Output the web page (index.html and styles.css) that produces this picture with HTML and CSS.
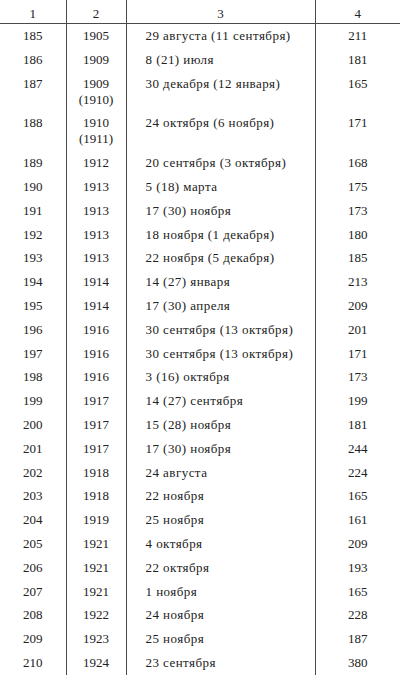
FILE: index.html
```html
<!DOCTYPE html>
<html lang="ru">
<head>
<meta charset="utf-8">
<link rel="stylesheet" href="styles.css">
</head>
<body>
<table class="tbl">
<colgroup><col class="c1"><col class="c2"><col class="c3"><col class="c4"></colgroup>
<thead>
<tr><th>1</th><th>2</th><th>3</th><th>4</th></tr>
</thead>
<tbody>
<tr><td>185</td><td>1905</td><td>29 августа (11 сентября)</td><td>211</td></tr>
<tr><td>186</td><td>1909</td><td>8 (21) июля</td><td>181</td></tr>
<tr><td>187</td><td>1909<br>(1910)</td><td>30 декабря (12 января)</td><td>165</td></tr>
<tr><td>188</td><td>1910<br>(1911)</td><td>24 октября (6 ноября)</td><td>171</td></tr>
<tr><td>189</td><td>1912</td><td>20 сентября (3 октября)</td><td>168</td></tr>
<tr><td>190</td><td>1913</td><td>5 (18) марта</td><td>175</td></tr>
<tr><td>191</td><td>1913</td><td>17 (30) ноября</td><td>173</td></tr>
<tr><td>192</td><td>1913</td><td>18 ноября (1 декабря)</td><td>180</td></tr>
<tr><td>193</td><td>1913</td><td>22 ноября (5 декабря)</td><td>185</td></tr>
<tr><td>194</td><td>1914</td><td>14 (27) января</td><td>213</td></tr>
<tr><td>195</td><td>1914</td><td>17 (30) апреля</td><td>209</td></tr>
<tr><td>196</td><td>1916</td><td>30 сентября (13 октября)</td><td>201</td></tr>
<tr><td>197</td><td>1916</td><td>30 сентября (13 октября)</td><td>171</td></tr>
<tr><td>198</td><td>1916</td><td>3 (16) октября</td><td>173</td></tr>
<tr><td>199</td><td>1917</td><td>14 (27) сентября</td><td>199</td></tr>
<tr><td>200</td><td>1917</td><td>15 (28) ноября</td><td>181</td></tr>
<tr><td>201</td><td>1917</td><td>17 (30) ноября</td><td>244</td></tr>
<tr><td>202</td><td>1918</td><td>24 августа</td><td>224</td></tr>
<tr><td>203</td><td>1918</td><td>22 ноября</td><td>165</td></tr>
<tr><td>204</td><td>1919</td><td>25 ноября</td><td>161</td></tr>
<tr><td>205</td><td>1921</td><td>4 октября</td><td>209</td></tr>
<tr><td>206</td><td>1921</td><td>22 октября</td><td>193</td></tr>
<tr><td>207</td><td>1921</td><td>1 ноября</td><td>165</td></tr>
<tr><td>208</td><td>1922</td><td>24 ноября</td><td>228</td></tr>
<tr><td>209</td><td>1923</td><td>25 ноября</td><td>187</td></tr>
<tr><td>210</td><td>1924</td><td>23 сентября</td><td>380</td></tr>
</tbody>
</table>
</body>
</html>
```
FILE: styles.css
```css
html, body {
  margin: 0;
  padding: 0;
  background: #ffffff;
}
body {
  font: 13px Tinos, "Liberation Serif";
  color: #222222;
}
.tbl {
  width: 400px;
  border-collapse: collapse;
  table-layout: fixed;
  font: 13px Tinos, "Liberation Serif";
}
.c1 { width: 66px; }
.c2 { width: 60px; }
.c3 { width: 189px; }
.c4 { width: 85px; }
.tbl th {
  font-weight: normal;
  height: 16px;
  line-height: 16px;
  padding: 6px 0 1px;
  text-align: center;
  border-bottom: 1px solid #4a4a4a;
}
.tbl td {
  line-height: 16px;
  padding: 4px 0 3.8px;
  text-align: center;
  vertical-align: top;
}
.tbl td:nth-child(3) {
  text-align: left;
  padding-left: 19px;
  letter-spacing: 0.45px;
}
.tbl th + th,
.tbl td + td {
  border-left: 1px solid #4a4a4a;
}
.tbl tbody tr:last-child td {
  padding-bottom: 12px;
}
```
